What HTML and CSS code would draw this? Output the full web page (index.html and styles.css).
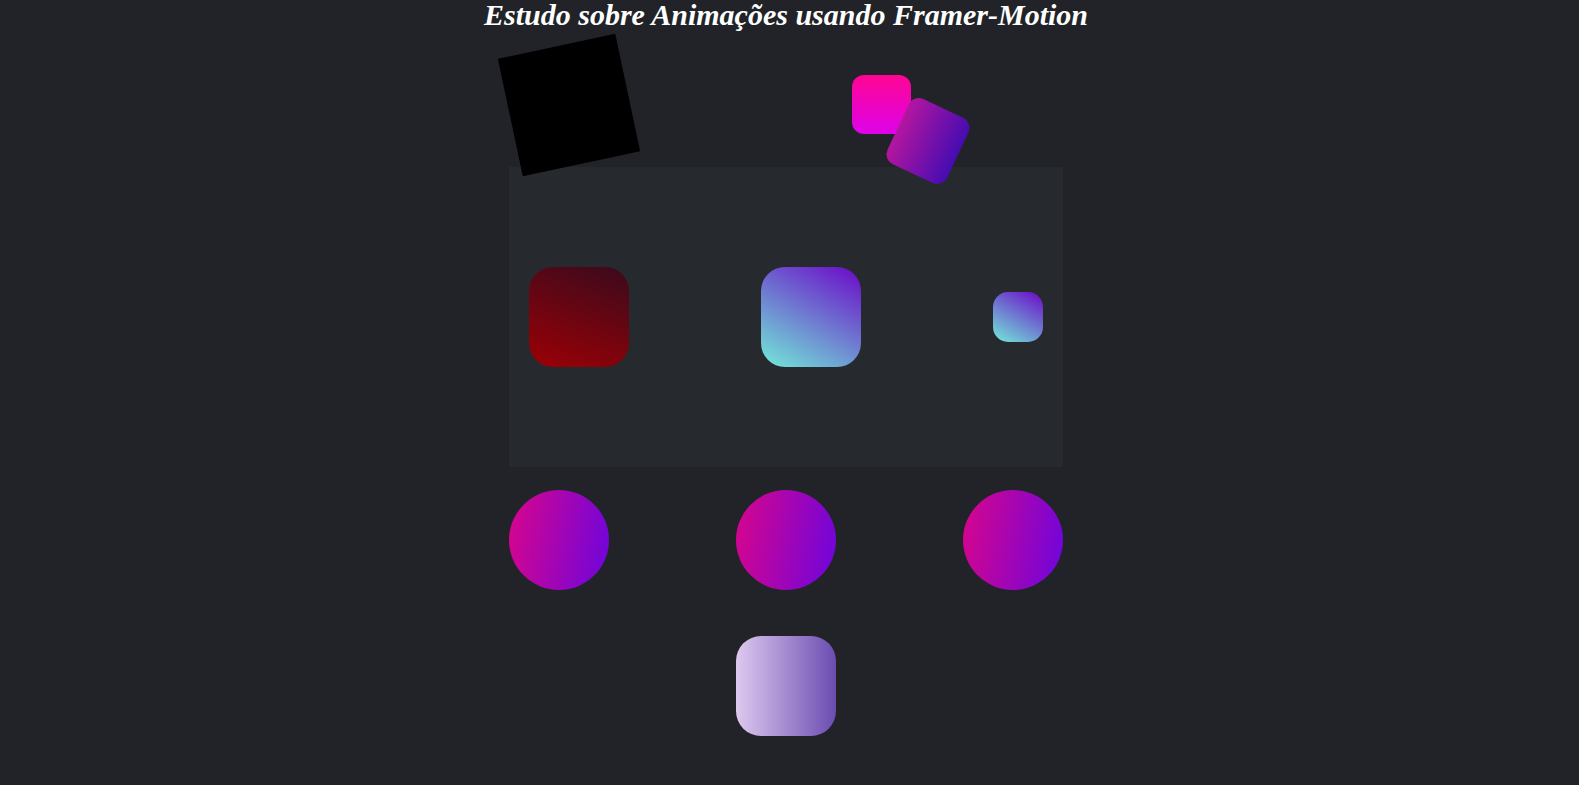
FILE: index.html
```html
<!DOCTYPE html>
<html lang="pt-BR">
<head>
<meta charset="utf-8">
<title>Framer-Motion</title>
<link rel="stylesheet" href="styles.css">
</head>
<body>
  <h1 class="title">Estudo sobre Animações usando Framer-Motion</h1>
  <main class="page">
    <div class="stage">
      <div class="black-square"></div>
      <div class="pink-square"></div>
      <div class="violet-square"></div>
    </div>
    <section class="panel">
      <div class="sq sq-red"></div>
      <div class="sq sq-aqua"></div>
      <div class="sq sq-aqua sq-small"></div>
    </section>
    <div class="circles">
      <div class="circle"></div>
      <div class="circle"></div>
      <div class="circle"></div>
    </div>
    <div class="bottom">
      <div class="lavender"></div>
    </div>
  </main>
</body>
</html>
```

FILE: styles.css
```css
* { box-sizing: border-box; }
html, body { height: 100%; }
body {
  margin: 0;
  padding: 0 7px 0 0;
  background: #212328;
  overflow: hidden;
}
.title {
  margin: 0;
  height: 30px;
  font-family: "Liberation Serif", "Times New Roman", serif;
  font-style: italic;
  font-weight: bold;
  font-size: 30px;
  line-height: 30px;
  color: #ffffff;
  text-align: center;
  white-space: nowrap;
}
.page {
  width: 554px;
  margin: 0 auto;
  display: flex;
  flex-direction: column;
}
.stage {
  position: relative;
  height: 137px;
}
.black-square {
  position: absolute;
  left: 0;
  top: 15px;
  width: 120px;
  height: 120px;
  background: #000;
  transform: rotate(-12deg);
  z-index: 2;
}
.pink-square {
  position: absolute;
  left: 343px;
  top: 45px;
  width: 59px;
  height: 59px;
  border-radius: 12px;
  background: linear-gradient(180deg, #ff0592, #dd03ea);
}
.violet-square {
  position: absolute;
  left: 386px;
  top: 75px;
  width: 66px;
  height: 72px;
  border-radius: 11px;
  background: linear-gradient(90deg, #b4169f, #450cb2);
  transform: rotate(25deg);
  z-index: 1;
}
.panel {
  height: 300px;
  background: #26292e;
  padding: 0 20px;
  display: flex;
  align-items: center;
  justify-content: space-between;
}
.sq {
  width: 100px;
  height: 100px;
  border-radius: 24px;
}
.sq-red { background: linear-gradient(20deg, #9c0006, #3a0a1c); }
.sq-aqua { background: linear-gradient(30deg, #72ead9, #6b08c8); }
.sq-small {
  width: 50px;
  height: 50px;
  border-radius: 15px;
}
.circles {
  margin-top: 23px;
  display: flex;
  justify-content: space-between;
}
.circle {
  width: 100px;
  height: 100px;
  border-radius: 50%;
  background: linear-gradient(100deg, #d9058a, #6c05de);
}
.bottom {
  margin-top: 46px;
  display: flex;
  justify-content: center;
}
.lavender {
  width: 100px;
  height: 100px;
  border-radius: 25px;
  background: linear-gradient(90deg, #dec9ef, #6b4cb1);
}
```
